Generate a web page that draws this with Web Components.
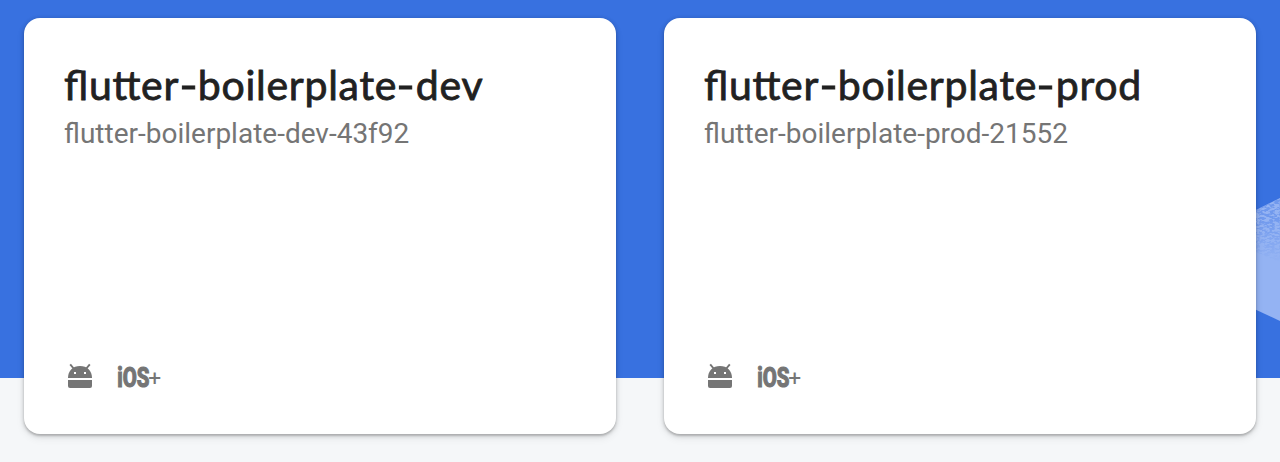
<!DOCTYPE html>
<html lang="en">
<head>
<meta charset="utf-8">
<title>Projects</title>
<style>
html,body{margin:0;height:100%;overflow:hidden}
body{font-family:Roboto,"Liberation Sans",sans-serif}
.dash{display:inline-block;transform:scaleX(1.22);margin:0 1.4px}
</style>
</head>
<body>
<project-board>
  <project-card>
    <span slot="name">flutter<span class="dash">-</span>boilerplate<span class="dash">-</span>dev</span>
    <span slot="id">flutter-boilerplate-dev-43f92</span>
    <android-icon slot="platforms"></android-icon>
    <ios-icon slot="platforms"></ios-icon>
  </project-card>
  <project-card>
    <span slot="name">flutter<span class="dash">-</span>boilerplate<span class="dash">-</span>prod</span>
    <span slot="id">flutter-boilerplate-prod-21552</span>
    <android-icon slot="platforms"></android-icon>
    <ios-icon slot="platforms"></ios-icon>
  </project-card>
</project-board>
<script>
const define = (name, html) => customElements.define(name, class extends HTMLElement {
  constructor() {
    super();
    this.attachShadow({mode: 'open'}).innerHTML = html;
  }
});

define('project-board', `
<style>
:host{display:block;position:relative;box-sizing:border-box;width:1280px;height:462px;overflow:hidden;
  background:linear-gradient(#3871e0 378px,#f5f7f9 378px)}
.grid{position:relative;display:grid;grid-template-columns:592px 592px;gap:48px;padding:18px 24px 0}
.art{position:absolute;right:0;top:190px;display:block}
</style>
<svg class="art" width="30" height="140" viewBox="1250 190 30 140" aria-hidden="true">
  <defs>
    <filter id="grain" x="0" y="0" width="1" height="1" color-interpolation-filters="sRGB">
      <feTurbulence type="fractalNoise" baseFrequency=".2 .5" numOctaves="2" seed="4"/>
      <feColorMatrix values="0 0 0 0 .44  0 0 0 0 .6  0 0 0 0 .93  9 0 0 0 -4"/>
      <feComposite in2="SourceGraphic" operator="in"/>
    </filter>
    <linearGradient id="fade" x1="0" y1="0" x2="0" y2="1">
      <stop offset=".3" stop-color="#fff"/><stop offset="1" stop-color="#fff" stop-opacity="0"/>
    </linearGradient>
  </defs>
  <path d="M1250 213 1280 198V321L1250 307Z" fill="#94b3f3"/>
  <path d="M1250 213 1280 198V262L1250 250Z" fill="url(#fade)" filter="url(#grain)"/>
</svg>
<div class="grid"><slot></slot></div>`);

define('project-card', `
<style>
:host{display:flex;flex-direction:column;box-sizing:border-box;height:416px;padding:43px 40px 44px;
  border-radius:16px;background:#fff;
  box-shadow:0 2px 2px rgba(0,0,0,.14),0 1px 5px rgba(0,0,0,.2),0 4px 8px rgba(0,0,0,.08)}
h2{margin:0;font:400 41px/48px Lato,"Open Sans",sans-serif;color:#212121;white-space:nowrap;
  -webkit-text-stroke:.8px #212121;letter-spacing:.72px;font-feature-settings:"liga" 1}
p{margin:7px 0 0;font-size:28px;line-height:36px;color:#757575;white-space:nowrap}
.platforms{display:flex;align-items:center;gap:22px;margin-top:auto;height:28px}
</style>
<h2><slot name="name"></slot></h2>
<p><slot name="id"></slot></p>
<div class="platforms"><slot name="platforms"></slot></div>`);

define('android-icon', `
<style>:host{display:block;width:28px;height:28px;margin-left:2px}svg{display:block}</style>
<svg width="28" height="28" viewBox="66 362 28 28" fill="#757575" aria-label="Android">
  <path d="M68 378C68 370.500 73 366 80 366S92 370.500 92 378Z"/>
  <path d="M74.500 369.500 70.200 364.300M85.500 369.500 89.800 364.300" stroke="#757575" stroke-width="1.900"/>
  <path d="M68 380H92V386Q92 388 90 388H70Q68 388 68 386Z"/>
  <path d="M74 372h2v2h-2zM84 372h2v2h-2z" fill="#fff"/>
</svg>`);

define('ios-icon', `
<style>:host{display:block;width:50px;height:36px}svg{display:block;overflow:visible}
text{font-family:Roboto,"Liberation Sans",sans-serif;font-weight:800}</style>
<svg width="50" height="36" viewBox="116 358 50 36" fill="#757575">
  <text y="387.500" font-size="26.800" transform="translate(117.200 0) scale(.76 1)" stroke="#757575" stroke-width="1.100" stroke-linejoin="miter">iOS<tspan font-size="22" font-weight="400" x="40.800" y="386.500" textLength="17" lengthAdjust="spacingAndGlyphs" stroke="none">+</tspan></text>
</svg>`);
</script>
</body>
</html>
